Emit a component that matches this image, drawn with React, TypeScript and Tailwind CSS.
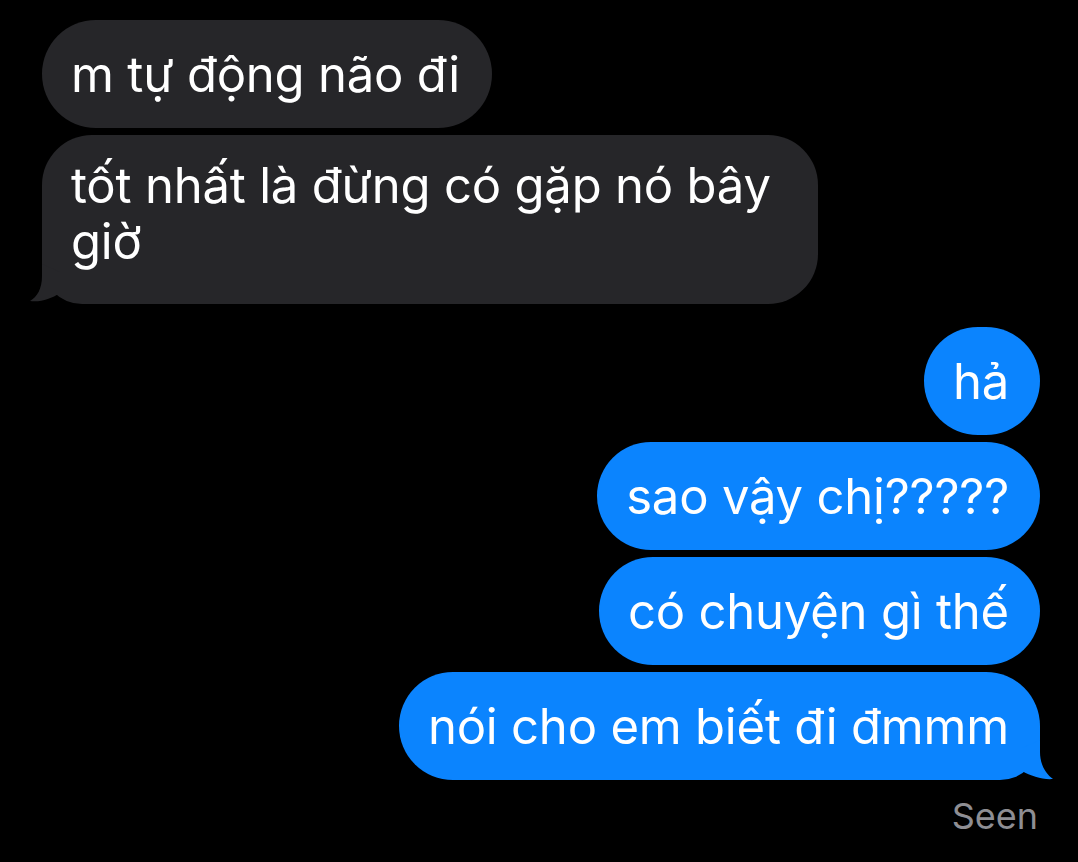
import React from "react";

const font = { fontFamily: 'Inter, "Noto Sans", sans-serif' };

function GrayTail() {
  return (
    <svg
      className="absolute bottom-0 left-[-12px]"
      width="40"
      height="40"
      viewBox="0 0 40 40"
    >
      <path d="M12 0 L12 12 C12 25 7 33 0 37 C10 38.5 21 35 30 29 L30 8 L12 0 Z" fill="#262629" />
    </svg>
  );
}

function BlueTail() {
  return (
    <svg
      className="absolute bottom-0 right-[-13px]"
      width="40"
      height="40"
      viewBox="0 0 40 40"
    >
      <path d="M27 0 L27 12 C27 25 33 34 40 39 C30 40 18 36 9 31 L9 8 L27 0 Z" fill="#0b84fe" />
    </svg>
  );
}

export default function App() {
  return (
    <div
      className="w-[1078px] h-[862px] bg-black text-white overflow-hidden pt-[20px] pl-[42px] pr-[38px] flex flex-col text-[49px] leading-[56px] tracking-[-0.2px]"
      style={font}
    >
      <div className="flex flex-col items-start gap-[7px]">
        <div className="bg-[#262629] rounded-[54px] pl-[29px] pr-[32px] pt-[27px] pb-[25px]">
          m tự động não đi
        </div>
        <div className="relative bg-[#262629] rounded-[50px] rounded-bl-[40px] w-[776px] pl-[29px] pr-[32px] pt-[23px] pb-[34px]">
          tốt nhất là đừng có gặp nó bây
          <br />
          giờ
          <GrayTail />
        </div>
      </div>
      <div className="flex flex-col items-end gap-[7px] mt-[23px]">
        <div className="bg-[#0b84fe] rounded-[54px] pl-[29px] pr-[31px] pt-[27px] pb-[25px]">hả</div>
        <div className="bg-[#0b84fe] rounded-[54px] pl-[29px] pr-[31px] pt-[27px] pb-[25px]">sao vậy chị?????</div>
        <div className="bg-[#0b84fe] rounded-[54px] pl-[29px] pr-[31px] pt-[27px] pb-[25px]">có chuyện gì thế</div>
        <div className="relative bg-[#0b84fe] rounded-[54px] rounded-br-[40px] pl-[29px] pr-[31px] pt-[27px] pb-[25px]">
          nói cho em biết đi đmmm
          <BlueTail />
        </div>
        <div className="text-[36px] leading-[40px] tracking-normal text-[#8e8e93] mt-[9px] pr-[2px]">Seen</div>
      </div>
    </div>
  );
}
